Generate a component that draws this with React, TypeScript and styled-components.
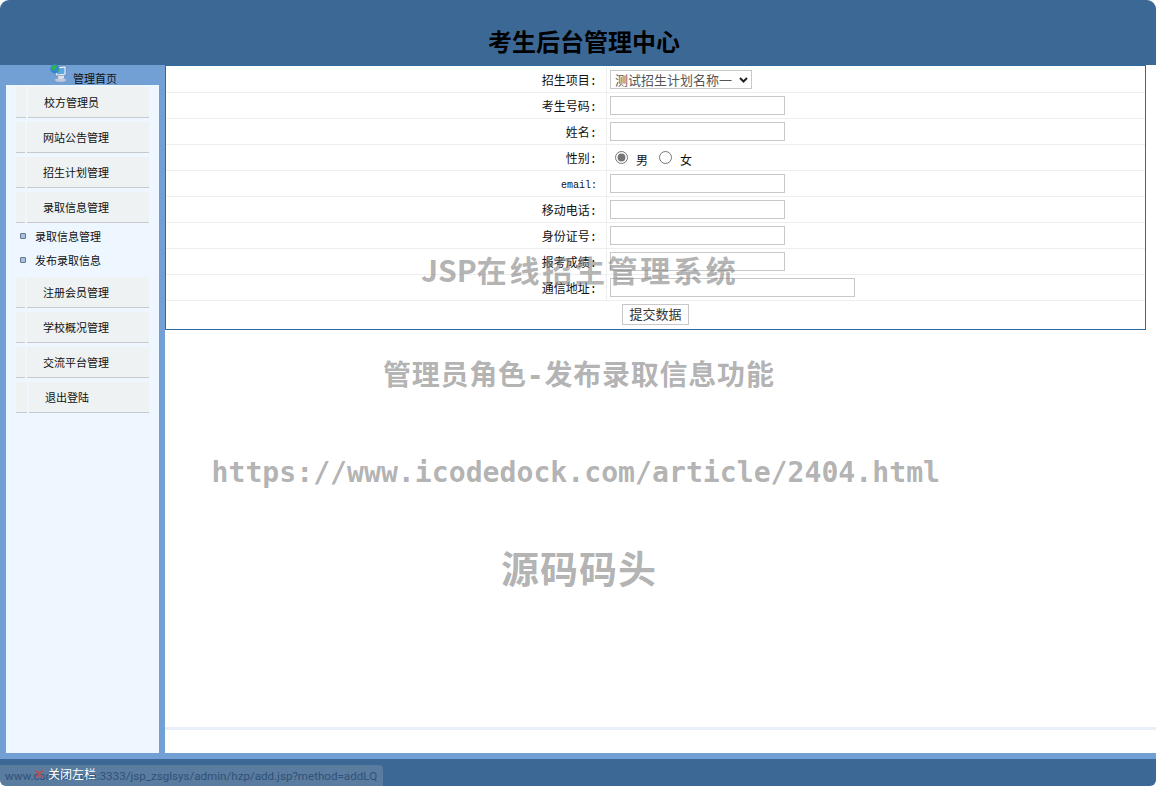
import { FC } from 'react'
import styled, { createGlobalStyle } from 'styled-components'

const CJK = '"Noto Sans CJK SC", "Liberation Sans", sans-serif'
const MONO_CJK = `"Liberation Mono", ${CJK}`

const GlobalStyle = createGlobalStyle`
  html, body {
    margin: 0;
    padding: 0;
    background: #fff;
  }
  body {
    font-family: ${CJK};
    font-size: 12px;
    color: #111;
  }
`

const Page = styled.div`
  position: relative;
  width: 1156px;
  height: 786px;
  display: flex;
  flex-direction: column;
  overflow: hidden;
  border-radius: 9px 9px 6px 6px;
`

const Header = styled.header`
  height: 65px;
  flex: none;
  background: #3c6895;
  display: flex;
  align-items: flex-end;
  justify-content: center;
  padding-left: 12px;
  box-sizing: border-box;
`

const Title = styled.h1`
  margin: 0 0 8px;
  font-size: 24px;
  line-height: 32px;
  font-weight: 700;
  color: #000;
`

const Main = styled.div`
  flex: 1;
  display: flex;
  min-height: 0;
`

const Sidebar = styled.aside`
  width: 165px;
  flex: none;
  background: #729fd4;
  padding: 0 6px;
  box-sizing: border-box;
  display: flex;
  flex-direction: column;
`

const SideHead = styled.div`
  height: 20px;
  flex: none;
  display: flex;
  align-items: flex-end;
  padding-left: 44px;
  gap: 6px;
  font-size: 11px;
  line-height: 14px;
  color: #111;
`

const HeadIcon = styled.svg`
  width: 17px;
  height: 18px;
  margin-bottom: 3px;
`

const SidePanel = styled.div`
  flex: 1;
  background: #eef7ff;
  padding: 2px 10px 0;
  display: flex;
  flex-direction: column;
`

const MenuItem = styled.div`
  height: 31px;
  flex: none;
  margin-bottom: 4px;
  display: flex;
  font-size: 11px;
  color: #111;
`

const MenuStub = styled.div<{ $width: number }>`
  width: ${p => p.$width}px;
  flex: none;
  margin-right: 2px;
  background: #eef2f3;
  border-bottom: 1px solid #c6cacc;
`

const MenuLabel = styled.div`
  flex: 1;
  padding-left: 16px;
  background: #eef2f3;
  border-bottom: 1px solid #c6cacc;
  line-height: 31px;
`

const SubList = styled.div`
  height: 53px;
  flex: none;
  margin-top: -3px;
  margin-left: -10px;
`

const SubItem = styled.div`
  height: 24px;
  display: flex;
  align-items: center;
  padding-left: 14px;
  gap: 9px;
  font-size: 11px;
  color: #111;
`

const Bullet = styled.span`
  width: 4px;
  height: 4px;
  border: 1px solid #64748f;
  background: #a9c2e4;
  border-radius: 1px;
`

const Content = styled.main`
  flex: 1;
  display: flex;
  flex-direction: column;
  background: #fff;
`

const FormBox = styled.form`
  width: 981px;
  height: 265px;
  box-sizing: border-box;
  border: 1px solid #2f6a9f;
  padding-top: 1px;
  display: flex;
  flex-direction: column;
`

const Row = styled.div`
  height: 26px;
  flex: none;
  box-sizing: border-box;
  display: grid;
  grid-template-columns: 441px 1fr;
  grid-template-rows: 25px;
  border-bottom: 1px solid #eeeeee;
`

const LabelCell = styled.label<{ $small?: boolean }>`
  border-right: 1px solid #eeeeee;
  text-align: right;
  padding-right: 9px;
  font-size: ${p => (p.$small ? '10px' : '12px')};
  font-family: ${p => (p.$small ? '"Liberation Mono", monospace' : MONO_CJK)};
  line-height: 30px;
`

const FieldCell = styled.div`
  display: flex;
  align-items: center;
  padding-left: 3px;
`

const TextInput = styled.input<{ $width?: number }>`
  width: ${p => p.$width ?? 175}px;
  height: 19px;
  box-sizing: border-box;
  border: 1px solid #c8c8c8;
  padding: 0 2px;
  background: #fff;
  outline: none;
`

const SelectBox = styled.div`
  width: 142px;
  height: 19px;
  box-sizing: border-box;
  border: 1px solid #c8c8c8;
  background: #fff;
  display: flex;
  align-items: center;
  justify-content: space-between;
  padding: 0 3px 0 4px;
  font-size: 13px;
  line-height: 17px;
  color: #555;
`

const Radio = styled.input`
  width: 13px;
  height: 13px;
  margin: 0 8px 0 5px;
  accent-color: #767676;
`

const RadioText = styled.span`
  line-height: 25px;
  margin-right: 6px;
  padding-top: 4px;
`

const SubmitRow = styled.div`
  flex: 1;
  display: flex;
  align-items: center;
  justify-content: center;
  padding-bottom: 1px;
`

const SubmitButton = styled.button`
  width: 67px;
  height: 21px;
  box-sizing: border-box;
  background: #fff;
  border: 1px solid #c8c8c8;
  padding: 0 0 2px;
  font-family: ${CJK};
  font-size: 13px;
  line-height: 17px;
  color: #333;
`

const RuleLine = styled.div`
  height: 3px;
  margin-top: auto;
  margin-bottom: 23px;
  background: #e8eff8;
  flex: none;
`

const BlueBar = styled.div`
  height: 6px;
  flex: none;
  background: #729fd4;
`

const Footer = styled.footer`
  height: 27px;
  flex: none;
  background: #3c6895;
  display: flex;
  align-items: center;
  padding: 2px 0 0 35px;
  box-sizing: border-box;
  gap: 5px;
  color: #fff;
`

const FooterLabel = styled.span`
  position: relative;
  z-index: 2;
  color: #fff;
`

const CloseIcon = styled.svg`
  position: relative;
  z-index: 2;
  flex: none;
`

const Watermarks = styled.div`
  position: absolute;
  inset: 0;
  pointer-events: none;
`

const Mark = styled.div<{ $top: number; $left: number; $size: number; $spacing?: number; $mono?: boolean }>`
  position: absolute;
  top: ${p => p.$top}px;
  left: ${p => p.$left}px;
  font-size: ${p => p.$size}px;
  letter-spacing: ${p => p.$spacing ?? 0}px;
  line-height: 40px;
  font-weight: 700;
  white-space: nowrap;
  color: rgba(130, 130, 130, 0.62);
  font-family: ${p => (p.$mono ? '"DejaVu Sans Mono", monospace' : CJK)};
`

const MarkWide = styled.span`
  letter-spacing: 2.7px;
`

const MarkDash = styled.span`
  font-family: "DejaVu Sans Mono", monospace;
`

const StatusBubble = styled.div`
  position: absolute;
  left: 0;
  bottom: 0;
  width: 383px;
  height: 21px;
  box-sizing: border-box;
  padding-left: 5px;
  border-radius: 0 4px 0 0;
  background: rgba(190, 190, 190, 0.24);
  color: #2f527a;
  font-family: Roboto, sans-serif;
  font-size: 11.6px;
  line-height: 23px;
  white-space: nowrap;
`

const menuTop = [
  { label: '校方管理员', stub: 10 },
  { label: '网站公告管理', stub: 9 },
  { label: '招生计划管理', stub: 9 },
  { label: '录取信息管理', stub: 9 },
]

const menuBottom = [
  { label: '注册会员管理', stub: 9 },
  { label: '学校概况管理', stub: 9 },
  { label: '交流平台管理', stub: 9 },
  { label: '退出登陆', stub: 11 },
]

const textFields = [
  { label: '考生号码:' },
  { label: '姓名:' },
]

const moreFields = [
  { label: '移动电话:' },
  { label: '身份证号:' },
  { label: '报考成绩:' },
]

const MenuEntry: FC<{ label: string; stub: number }> = ({ label, stub }) => (
  <MenuItem>
    <MenuStub $width={stub} />
    <MenuLabel>{label}</MenuLabel>
  </MenuItem>
)

const TextRow: FC<{ label: string; small?: boolean; width?: number }> = ({ label, small, width }) => (
  <Row>
    <LabelCell $small={small}>{label}</LabelCell>
    <FieldCell>
      <TextInput type='text' $width={width} />
    </FieldCell>
  </Row>
)

export default function App() {
  return (
    <Page>
      <GlobalStyle />
      <Header>
        <Title>考生后台管理中心</Title>
      </Header>
      <Main>
        <Sidebar>
          <SideHead>
            <HeadIcon viewBox='0 0 17 18'>
              <ellipse cx='10.5' cy='16' rx='5.5' ry='1.8' fill='#c4c9dc' />
              <path d='M8 10 H14 V14 C14 15 8 15 8 14 Z' fill='#dfe3f0' />
              <path d='M4 3 L16 2 V11 L6 12 Z' fill='#f2f6fc' stroke='#6f83aa' strokeWidth='0.7' />
              <path d='M6 4.5 L14.5 3.8 V9.8 L7 10.5 Z' fill='#5aa6de' />
              <circle cx='4.8' cy='4.8' r='4.6' fill='#2f86d2' />
              <path d='M1 3 C2.5 0.6 5.5 0.3 7 1.8 C7 4 5 4.5 4 6.5 C2.5 6.5 1.3 5 1 3 Z' fill='#35b04f' />
              <path d='M6.5 6 L9.2 5 L8.2 8 Z' fill='#35b04f' />
            </HeadIcon>
            管理首页
          </SideHead>
          <SidePanel>
            {menuTop.map(m => (
              <MenuEntry key={m.label} {...m} />
            ))}
            <SubList>
              <SubItem>
                <Bullet />
                录取信息管理
              </SubItem>
              <SubItem>
                <Bullet />
                发布录取信息
              </SubItem>
            </SubList>
            {menuBottom.map(m => (
              <MenuEntry key={m.label} {...m} />
            ))}
          </SidePanel>
        </Sidebar>
        <Content>
          <FormBox>
            <Row>
              <LabelCell>招生项目:</LabelCell>
              <FieldCell>
                <SelectBox>
                  测试招生计划名称一
                  <svg width='9' height='6' viewBox='0 0 9 6'>
                    <path d='M1 1 L4.5 4.5 L8 1' fill='none' stroke='#222' strokeWidth='2' />
                  </svg>
                </SelectBox>
              </FieldCell>
            </Row>
            {textFields.map(f => (
              <TextRow key={f.label} {...f} />
            ))}
            <Row>
              <LabelCell>性别:</LabelCell>
              <FieldCell>
                <Radio type='radio' name='sex' defaultChecked />
                <RadioText>男</RadioText>
                <Radio type='radio' name='sex' />
                <RadioText>女</RadioText>
              </FieldCell>
            </Row>
            <TextRow label='email:' small />
            {moreFields.map(f => (
              <TextRow key={f.label} {...f} />
            ))}
            <TextRow label='通信地址:' width={245} />
            <SubmitRow>
              <SubmitButton type='button'>提交数据</SubmitButton>
            </SubmitRow>
          </FormBox>
          <RuleLine />
        </Content>
      </Main>
      <BlueBar />
      <Footer>
        <CloseIcon width='8' height='8' viewBox='0 0 8 8'>
          <path d='M1 1 L7 7 M7 1 L1 7' stroke='#b4505e' strokeWidth='2' strokeLinecap='round' />
        </CloseIcon>
        <FooterLabel>关闭左栏</FooterLabel>
      </Footer>
      <Watermarks>
        <Mark $top={249} $left={421} $size={30}>JSP<MarkWide>在线招生管理系统</MarkWide></Mark>
        <Mark $top={353} $left={383} $size={28} $spacing={0.77}>管理员角色<MarkDash>-</MarkDash>发布录取信息功能</Mark>
        <Mark $top={453} $left={211.5} $size={28.15} $mono>https://www.icodedock.com/article/2404.html</Mark>
        <Mark $top={547} $left={501} $size={38} $spacing={1}>源码码头</Mark>
      </Watermarks>
      <StatusBubble>www.csdnbk.com:3333/jsp_zsglsys/admin/hzp/add.jsp?method=addLQ</StatusBubble>
    </Page>
  )
}
